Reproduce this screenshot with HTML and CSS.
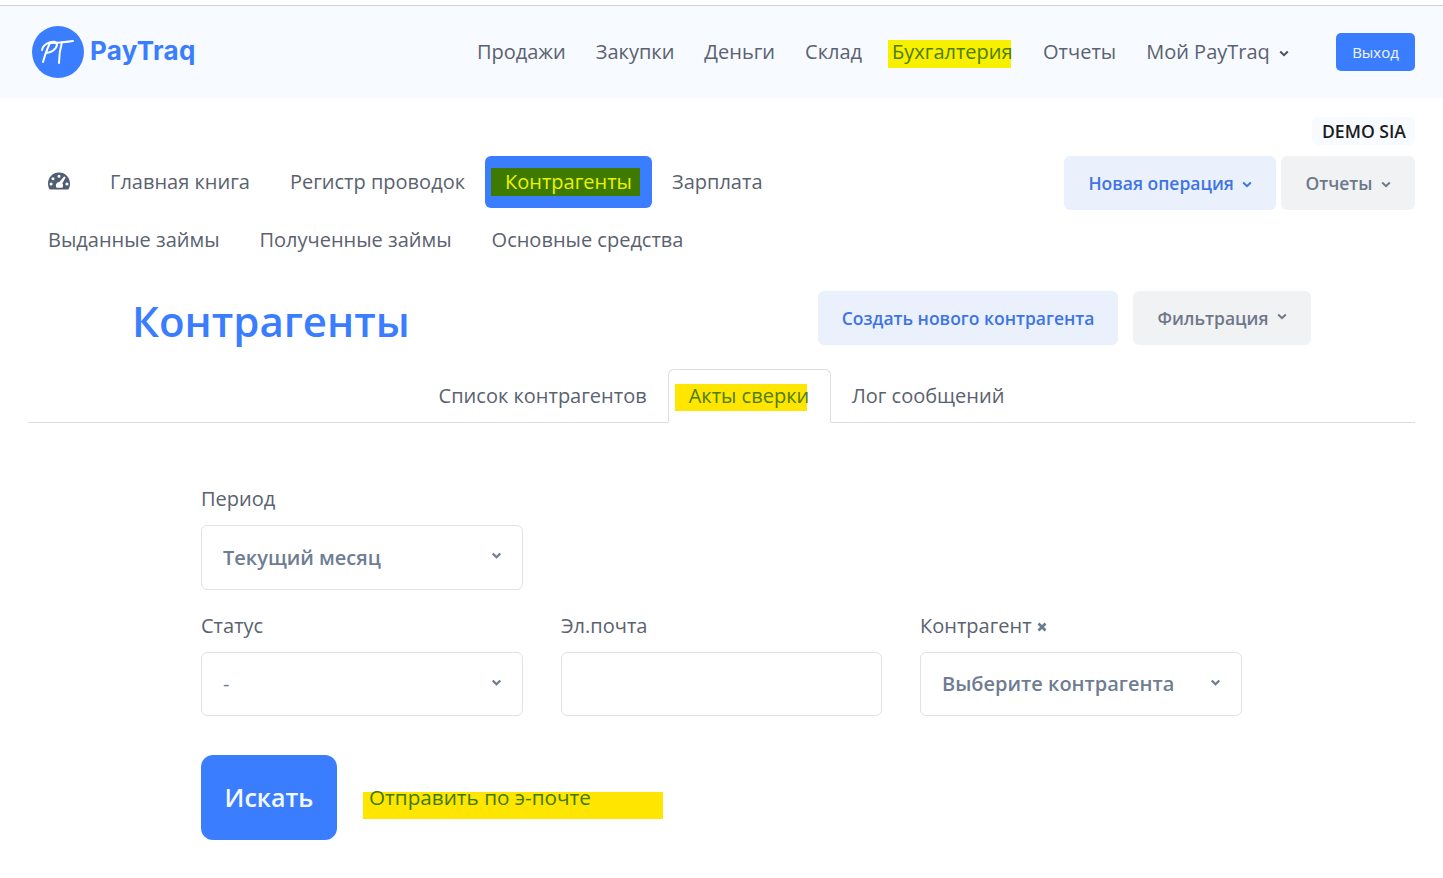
FILE: index.html
```html
<!DOCTYPE html>
<html lang="ru">
<head>
<meta charset="utf-8">
<title>Контрагенты</title>
<link rel="stylesheet" href="styles.css">
</head>
<body>
<header class="topbar">
  <a class="brand">
    <svg class="brand-mark" viewBox="0 0 52 52" width="52" height="52">
      <circle cx="26" cy="26" r="26" fill="#3b7dff"/>
      <path d="M11 36 C13 29 15 23 18 17 M10 24 C11 17 24 13 25 18 C25 23 19 27 14 27 M18 17 C26 17 34 16 41 15 M30 16 C28 23 27 30 27 37" fill="none" stroke="#fff" stroke-width="2" stroke-linecap="round"/>
    </svg>
    <span class="brand-name">PayTraq</span>
  </a>
  <nav class="mainnav">
    <a>Продажи</a>
    <a>Закупки</a>
    <a>Деньги</a>
    <a>Склад</a>
    <a class="hl-main">Бухгалтерия</a>
    <a>Отчеты</a>
    <a>Мой PayTraq <svg class="chev chev-dark" viewBox="0 0 10 7"><path d="M1.2 1.5 5 5.2 8.8 1.5"/></svg></a>
  </nav>
  <a class="logout">Выход</a>
</header>

<main class="page">
  <div class="company-row"><span class="company">DEMO SIA</span></div>

  <div class="subnav-row">
    <nav class="subnav">
      <a class="gauge-link">
        <svg class="gauge" viewBox="0 0 23 18" width="22" height="18">
          <path fill-rule="evenodd" d="M11.5 0C5.1 0 0 5.1 0 11.5c0 2.3.6 4.5 1.8 6.5h19.4c1.2-2 1.800-4.200 1.800-6.500C23 5.100 17.900 0 11.500 0ZM11.500 2.500a1.600 1.600 0 1 1 0 3.200 1.600 1.600 0 0 1 0-3.200ZM5.200 5a1.600 1.600 0 1 1 0 3.200 1.600 1.600 0 0 1 0-3.200ZM3.200 10.500a1.600 1.600 0 1 1 0 3.200 1.600 1.600 0 0 1 0-3.200ZM19.800 10.500a1.600 1.600 0 1 1 0 3.200 1.600 1.600 0 0 1 0-3.200ZM16.800 4.200l1.700.8-3.500 6.700c.5.6.8 1.300.8 2.100 0 .8-.3 1.500-.7 2.200h-6.200c-.4-.7-.7-1.400-.7-2.200 0-2 1.600-3.600 3.600-3.700Z" fill="#4f5d73"/>
        </svg>
      </a>
      <a>Главная книга</a>
      <a>Регистр проводок</a>
      <a class="active"><span class="hl-active">Контрагенты</span></a>
      <a>Зарплата</a>
      <a>Выданные займы</a>
      <a>Полученные займы</a>
      <a>Основные средства</a>
    </nav>
    <div class="actions">
      <button class="btn btn-light">Новая операция <svg class="chev" viewBox="0 0 10 7"><path d="M1.2 1.5 5 5.2 8.8 1.5"/></svg></button>
      <button class="btn btn-grey">Отчеты <svg class="chev" viewBox="0 0 10 7"><path d="M1.2 1.5 5 5.2 8.8 1.5"/></svg></button>
    </div>
  </div>

  <div class="title-row">
    <h1 class="title">Контрагенты</h1>
    <div class="title-actions">
      <button class="btn btn-light">Создать нового контрагента</button>
      <button class="btn btn-grey btn-filter">Фильтрация <svg class="chev chev-up" viewBox="0 0 10 7"><path d="M1.2 1.5 5 5.2 8.8 1.5"/></svg></button>
    </div>
  </div>

  <div class="tabs">
    <a class="tab">Список контрагентов</a>
    <a class="tab tab-active"><span class="hl-tab">Акты сверки</span></a>
    <a class="tab">Лог сообщений</a>
  </div>

  <form class="form">
    <div class="form-grid">
      <div class="field">
        <label class="label">Период</label>
        <div class="control control-tall"><span>Текущий месяц</span><svg class="chev chev-select chev-tall" viewBox="0 0 10 7"><path d="M1.2 1.5 5 5.2 8.8 1.5"/></svg></div>
      </div>
      <div class="spacer"></div>
      <div class="spacer"></div>
      <div class="field">
        <label class="label">Статус</label>
        <div class="control"><span class="dash">-</span><svg class="chev chev-select" viewBox="0 0 10 7"><path d="M1.2 1.5 5 5.2 8.8 1.5"/></svg></div>
      </div>
      <div class="field">
        <label class="label">Эл.почта</label>
        <div class="control"></div>
      </div>
      <div class="field">
        <label class="label">Контрагент <svg class="close" viewBox="0 0 10 10" width="10" height="10"><path d="M1.5 1.5 8.5 8.5M8.5 1.5 1.5 8.5"/></svg></label>
        <div class="control"><span>Выберите контрагента</span><svg class="chev chev-select" viewBox="0 0 10 7"><path d="M1.2 1.5 5 5.2 8.8 1.5"/></svg></div>
      </div>
    </div>
    <div class="form-actions">
      <button class="btn-search" type="button">Искать</button>
      <a class="send">Отправить по э-почте</a>
    </div>
  </form>
</main>
</body>
</html>
```
FILE: styles.css
```css
* { box-sizing: border-box; }
html, body { margin: 0; padding: 0; background: #fff; }
body {
  font-family: "Open Sans", "Noto Sans", sans-serif;
  font-size: 20px;
  color: #5a6270;
  height: 878px;
  overflow: hidden;
  padding-top: 5px;
}
a { color: inherit; text-decoration: none; }

.topbar {
  height: 93px;
  border-top: 1px solid #cfd2d4;
  background: #f7faff;
  display: flex;
  align-items: center;
  padding: 0 28px 0 32px;
}
.brand { display: flex; align-items: center; gap: 6px; }
.brand-mark { display: block; }
.brand-name {
  font-family: Inter, sans-serif;
  font-weight: 700;
  font-size: 26px;
  letter-spacing: 0.3px;
  color: #3b7dff;
  padding-bottom: 3px;
}
.mainnav {
  margin-left: auto;
  display: flex;
  align-items: center;
  gap: 30px;
  margin-right: 47px;
  padding-bottom: 2px;
}
.hl-main {
  background: #f7f000;
  color: #4f7d00;
  height: 28px;
  line-height: 24px;
  width: 123px;
  padding-left: 4px;
  margin: 6px 2px 0 -4px;
  white-space: nowrap;
}
.logout {
  width: 79px;
  height: 38px;
  background: #3b7dff;
  border-radius: 5px;
  color: #f2f6ff;
  font-size: 15px;
  display: flex;
  align-items: center;
  justify-content: center;
}

.chev {
  width: 10px;
  height: 7px;
  margin-left: 6px;
  vertical-align: 2px;
  fill: none;
  stroke: currentColor;
  stroke-width: 2;
}
.chev-dark { color: #4a5160; margin-left: 4px; }

.page { padding: 0 28px; }
.company-row { display: flex; justify-content: flex-end; padding-top: 19px; }
.company {
  height: 28px;
  line-height: 28px;
  padding: 0 9px 0 10px;
  background: #f7faff;
  border-radius: 6px;
  color: #1c1c20;
  font-size: 17.6px;
  font-weight: 600;
}

.subnav-row { display: flex; justify-content: space-between; align-items: flex-start; margin-top: 11px; }
.subnav { display: flex; flex-wrap: wrap; width: 800px; row-gap: 6px; }
.subnav a {
  height: 52px;
  padding: 0 20px 2px;
  display: flex;
  align-items: center;
  border-radius: 6px;
  white-space: nowrap;
}
.subnav .active { background: #3b7dff; padding: 0 12px 0 6px; }
.hl-active {
  background: #3f7a00;
  color: #e9f400;
  height: 28px;
  line-height: 27px;
  width: 149px;
  padding-left: 14px;
  white-space: nowrap;
}
.actions { display: flex; gap: 5px; }
.btn {
  height: 54px;
  border: 0;
  border-radius: 6px;
  font-family: inherit;
  font-size: 17.5px;
  font-weight: 600;
  padding: 0 24px;
}
.btn-light { background: #eaf1fd; color: #3f74e4; }
.btn-grey { background: #f1f2f4; color: #6e7889; }
.btn .chev { margin-left: 4px; }

.title-row {
  display: flex;
  align-items: flex-start;
  margin-top: 25px;
  padding-left: 104px;
  height: 78px;
}
.title {
  margin: 0;
  font-size: 42px;
  font-weight: 600;
  color: #3b7dff;
  line-height: 60px;
}
.title-actions { display: flex; gap: 15px; margin-left: auto; margin-right: 104px; }
.btn-filter .chev-up { vertical-align: 5px; }

.tabs {
  display: flex;
  justify-content: center;
  border-bottom: 1px solid #dcdee0;
  height: 54px;
}
.tab {
  height: 54px;
  padding: 13px 21px 0;
  line-height: 27px;
  white-space: nowrap;
}
.tab-active {
  border: 1px solid #dcdee0;
  border-bottom: 1px solid #fff;
  border-radius: 6px 6px 0 0;
  background: #fff;
  padding: 14px 23px 0 6px;
}
.hl-tab {
  display: block;
  width: 132px;
  height: 27px;
  padding-left: 14px;
  line-height: 24px;
  background: #ffe600;
  color: #4f7d00;
  white-space: nowrap;
}

.form { padding: 60px 0 0 173px; }
.form-grid {
  display: grid;
  grid-template-columns: 322px 321px 322px;
  column-gap: 38px;
  row-gap: 20px;
}
.label {
  display: flex;
  align-items: center;
  gap: 5px;
  height: 30px;
  margin-bottom: 12px;
  color: #5a6270;
}
.close { fill: none; stroke: #6b7a90; stroke-width: 2.6; margin-top: 4px; }
.control {
  height: 64px;
  border: 1px solid #dfe2e6;
  border-radius: 6px;
  display: flex;
  align-items: center;
  justify-content: space-between;
  padding: 0 20px 1px 21px;
  color: #6e7d93;
  font-weight: 600;
  background: #fff;
}
.control-tall { height: 65px; padding-bottom: 0; }
.dash { font-weight: 400; }
.chev-select { margin: 0 0 2px; width: 11px; stroke-width: 2.3; }
.chev-tall { margin-bottom: 4px; }

.form-actions { display: flex; align-items: flex-start; margin-top: 39px; }
.btn-search {
  width: 136px;
  height: 85px;
  border: 0;
  border-radius: 12px;
  background: #3b7dff;
  color: #f4f8ff;
  font-family: inherit;
  font-size: 25px;
  font-weight: 600;
  padding: 0 0 2px;
}
.send {
  margin: 37px 0 0 26px;
  width: 300px;
  height: 27px;
  line-height: 11px;
  padding-left: 6px;
  background: #ffe600;
  color: #3f7a00;
  font-size: 20.7px;
  white-space: nowrap;
}
```
